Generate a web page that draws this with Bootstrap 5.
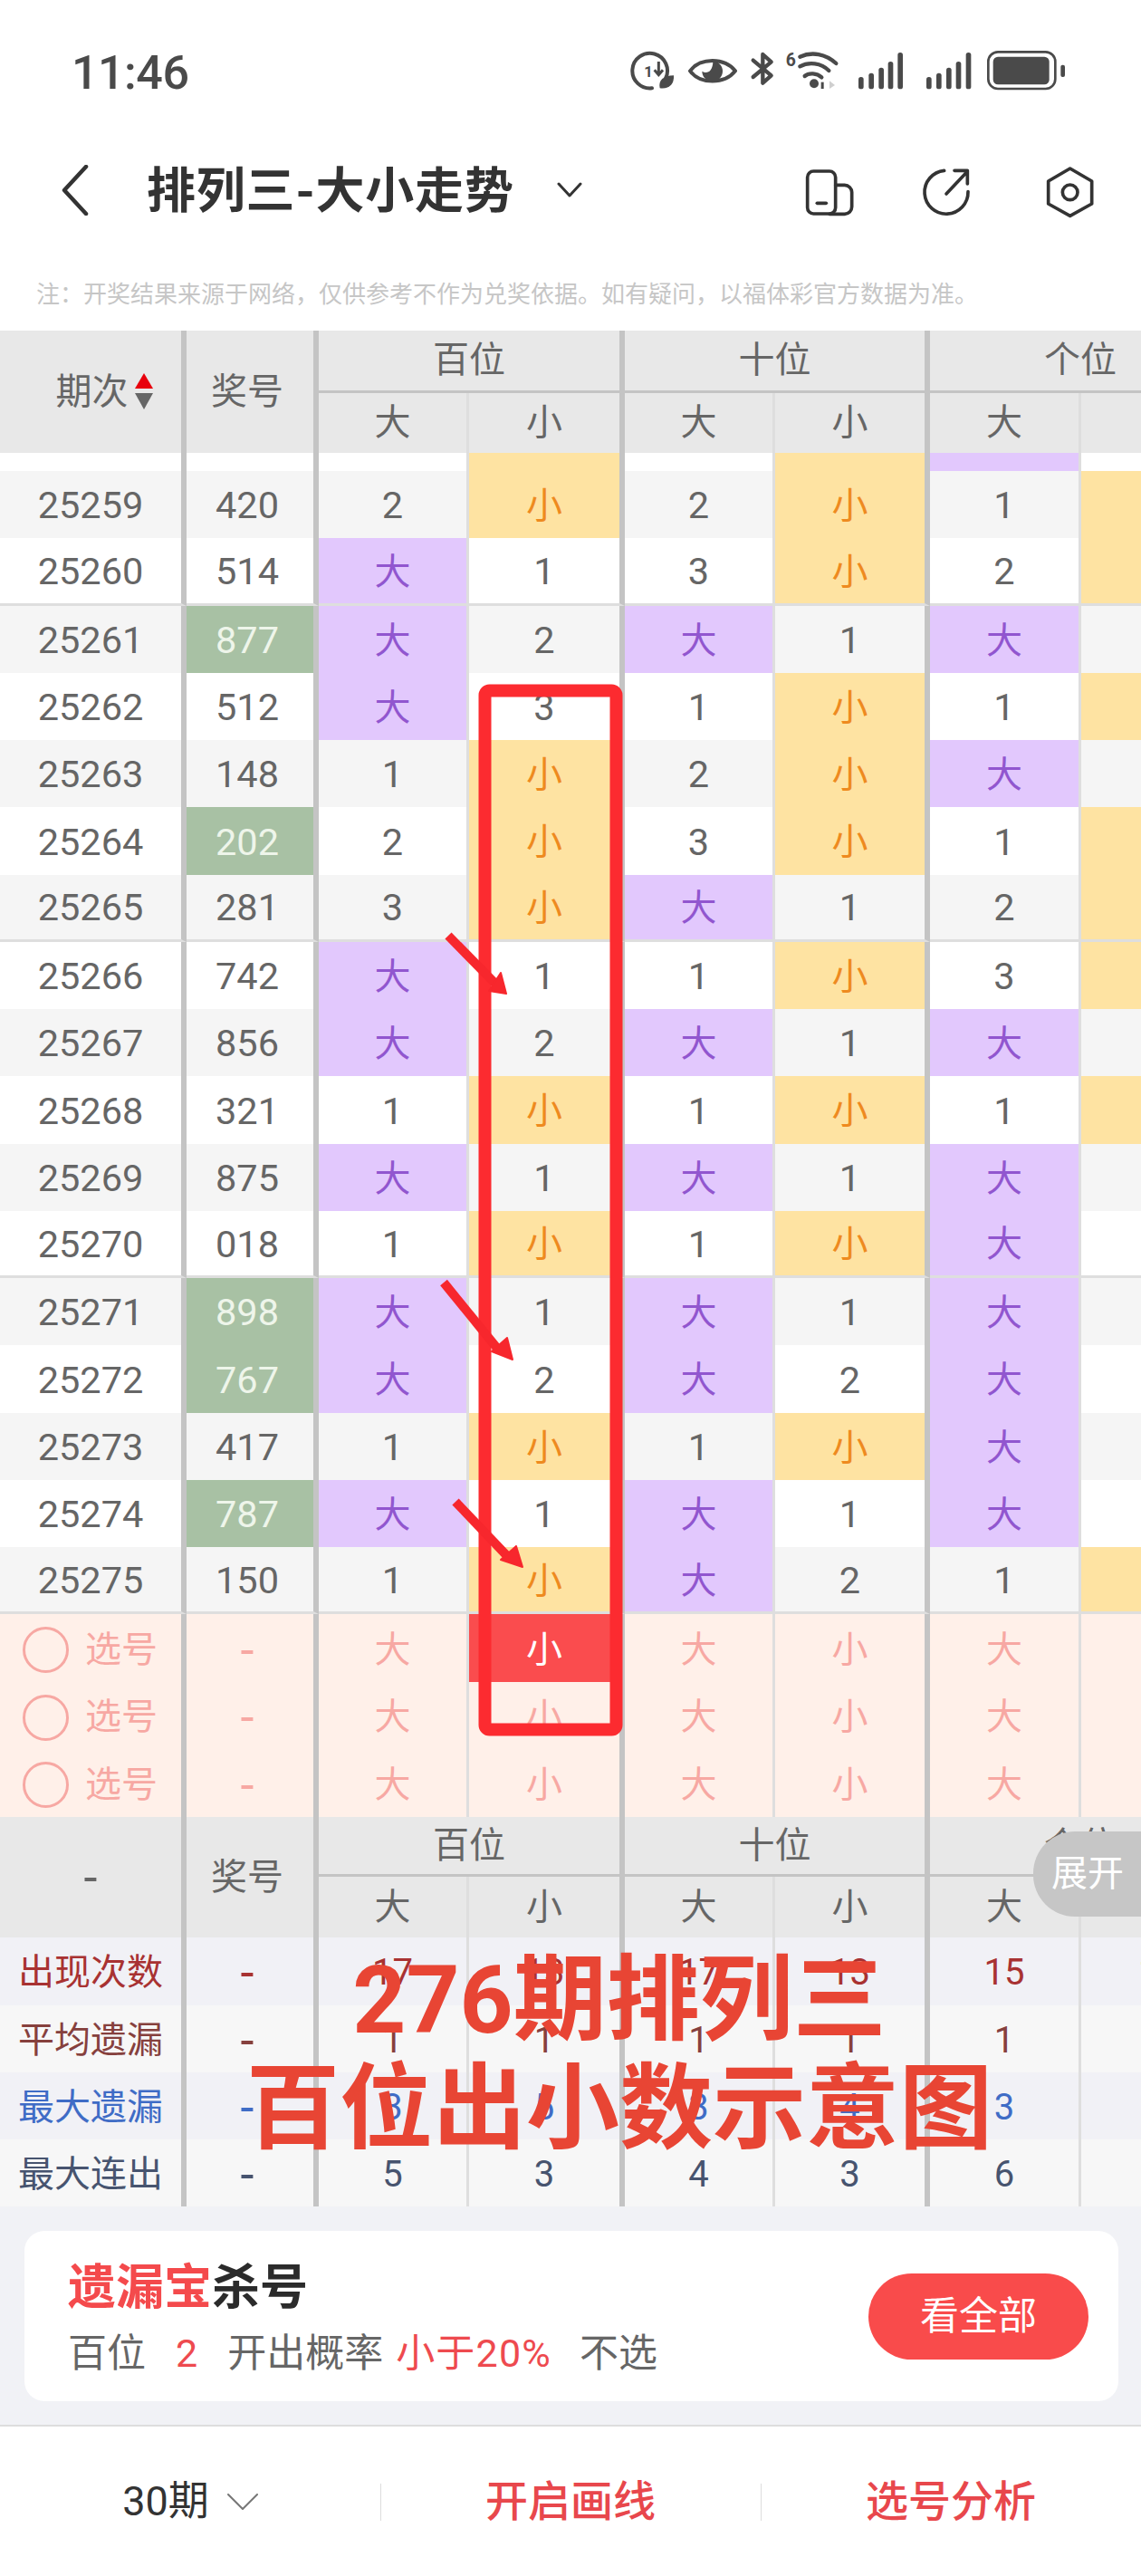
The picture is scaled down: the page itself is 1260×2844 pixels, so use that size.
<!DOCTYPE html>
<html lang="zh-CN">
<head>
  <meta charset="UTF-8" />
  <meta name="viewport" content="width=device-width, initial-scale=1.0"/>
  <title>排列三-大小走势</title>
  <link href="https://cdn.jsdelivr.net/npm/bootstrap@5.3.0/dist/css/bootstrap.min.css" rel="stylesheet" />
  <style>
      body { margin: 0; background: #fff; font-family: Roboto, "Noto Sans CJK SC", sans-serif; color: #666; }
      .screen { width: 1260px; height: 2844px; overflow: hidden; }

      .status-strip { height: 140px; padding: 43px 0 0 79px; }
      .clock { font-size: 52px; line-height: 76px; font-weight: 500; color: #4a4a4a; letter-spacing: -0.5px; }
      .status-icons { position: absolute; left: 680px; top: 40px; }

      .title-strip { height: 140px; padding-left: 68px; padding-right: 20px; }
      .page-title { margin: 3px 0 0 64px; font-size: 54px; font-weight: 700; color: #333; line-height: 1; letter-spacing: 0.8px; }
      .title-caret { margin-left: 47px; }

      .disclaimer { height: 85px; margin: 0; padding: 30px 0 0 40px; font-size: 26px; line-height: 30px; color: #c6c6c6; white-space: nowrap; }

      .trend-wrap { width: 1260px; overflow: hidden; }
      table.trend { width: 1365px; table-layout: fixed; border-collapse: separate; border-spacing: 0; margin: 0; font-size: 40px; line-height: 1; }
      table.trend td, table.trend th { padding: 0; border: 0; text-align: center; vertical-align: middle; font-weight: 400; color: #666; background: transparent; box-shadow: none; white-space: nowrap; }
      table.trend td { padding-top: 4px; }
      table.trend .edge { border-right: 6px solid #c4c4c4; }
      table.trend .hair { border-right: 3px solid #dedede; }
      table.trend .prize-col { padding-right: 6px; }
      table.trend .dash-text { font-size: 54px; }
      table.trend .digit-text { font-size: 41.5px; }
      table.trend td.digit-text { padding-top: 2px; }

      .head-band th { background: #e8e8e8 !important; }
      .head-top { height: 69px; }
      .head-sub { height: 66px; }
      .foot-top { height: 66.5px; }
      .foot-sub { height: 67px; }
      table.trend th.under { border-bottom: 3px solid #c4c4c4; }
      table.trend th.period-head { padding-left: 30px; }
      table.trend th.unit-head { padding-right: 6px; }
      .sort-mark { margin-left: 7px; vertical-align: -6px; }

      .draw-cut { height: 20px; }
      .draw-row { height: 74.25px; }
      .draw-row.tint td { background: #f5f5f5; }
      table.trend .draw-row.fifth td { border-bottom: 3px solid #dedede; }
      table.trend .cell-big, table.trend .draw-row td.cell-big { background: #e2c8fd; color: #9156cf; }
      table.trend .cell-small, table.trend .draw-row td.cell-small { background: #fee3a2; color: #ee8a1f; }
      table.trend .draw-row td.cell-pair { background: #a8c1a4; color: #eef5ea; }
      table.trend .draw-cut td { padding: 0; }

      .pick-row { height: 74.5px; }
      table.trend .pick-row td { background: #fff0e9; color: #f7a8a3; }
      table.trend .pick-row td.picked { background: #fa4c4e; color: #fff; }
      .pick-label { padding-left: 25px; gap: 18px; }
      .pick-ring { width: 51px; height: 51px; border: 3px solid #f7a8a3; border-radius: 50%; }

      .sum-row { height: 74.25px; }
      table.trend .sum-row.shade td { background: #f1f1f6; }
      table.trend .sum-row.plain td { background: #f7f7f7; }
      table.trend .sum-row.c-red td { color: #a83232; }
      table.trend .sum-row.c-brown td { color: #86403d; }
      table.trend .sum-row.c-blue td { color: #3f6cc6; }
      table.trend .sum-row.c-slate td { color: #47546f; }

      .kill-band { padding: 27px 25px 26px 27px; background: #f1f2f6; border-bottom: 2px solid #ddd; box-sizing: content-box; height: 188px; }
      .kill-card { height: 188px; background: #fff; border-radius: 22px; padding: 5px 33px 0 48px; }
      .kill-title { font-size: 53px; line-height: 1; font-weight: 700; color: #2b2b2b; margin-bottom: 24px; }
      .kill-red { color: #f44a4c; }
      .kill-text { font-size: 43px; line-height: 1; color: #666; }
      .kill-text .hot { color: #ee4a4f; }
      .gap-a { margin-left: 33px; }
      .gap-b { margin-left: 14px; letter-spacing: 1.2px; }
      .gap-c { margin-left: 31px; }
      .see-all { width: 243px; height: 95px; margin-top: -5px; border: 0; padding: 0; background: #f94b4b; color: #fff; font-size: 43px; line-height: 1; }
      .see-all:hover { background: #f94b4b; color: #fff; }

      .tool-strip { height: 165px; }
      .tool-cell { flex: 1 1 0; }
      .tool-cell + .tool-cell { position: relative; }
      .tool-cell + .tool-cell::before { content: ""; position: absolute; left: 0; top: 63px; height: 41px; border-left: 1px solid #ddd; }
      .tool-text { font-size: 47px; line-height: 1; font-weight: 500; color: #e8474c; }
      .period-text { font-size: 45px; line-height: 1; color: #333; margin-right: 20px; }

      .sketch-layer { position: absolute; left: 0; top: 0; pointer-events: none; }
      .poster { position: absolute; left: 0; top: 2149px; width: 1368px; text-align: center; font-size: 103px; line-height: 120px; font-weight: 700; color: #e84534; white-space: nowrap; }
      .unfold { position: absolute; left: 1141px; top: 2022px; width: 119px; height: 94px; padding-left: 20px; background: #c6c6c6; color: #fff; font-size: 40px; line-height: 1; border-radius: 46px 0 0 46px; }
  </style>
</head>
<body>
  <div class="screen position-relative">
      <div class="status-strip">
          <div class="clock">11:46</div>
      </div>
      <svg class="status-icons" width="520" height="60" viewBox="0 0 1560 180" fill="#4a4a4a">
          <!-- data saver -->
          <path d="M165 140 A58 58 0 1 0 120 172" fill="none" stroke="#4a4a4a" stroke-width="12" stroke-linecap="round"/>
          <text x="108" y="136" font-family="Roboto" font-weight="700" font-size="50" text-anchor="middle">1</text>
          <path d="M142 84v42m-14-14l14 16 14-16" fill="none" stroke="#4a4a4a" stroke-width="9"/>
          <path d="M146 172c-6-26 12-42 46-42 2 30-16 46-46 42z"/>
          <!-- eye -->
          <path d="M246 115C280 70 360 70 396 115C360 160 280 160 246 115z" fill="none" stroke="#4a4a4a" stroke-width="12" stroke-linejoin="round"/>
          <path d="M322 82a34 34 0 1 1-36 34c14 10 36 4 36-34z"/>
          <!-- bluetooth -->
          <path d="M455 80l60 50-28 25V60l28 25-60 50" fill="none" stroke="#4a4a4a" stroke-width="13" stroke-linejoin="round" stroke-linecap="round"/>
          <!-- wifi 6 -->
          <text x="580" y="100" font-family="Roboto" font-weight="700" font-size="58" text-anchor="middle">6</text>
          <g fill="none" stroke="#4a4a4a" stroke-width="13" stroke-linecap="round">
              <path d="M610 68C650 50 695 58 730 90"/>
              <path d="M610 100C640 84 680 88 706 114"/>
              <path d="M626 132C640 120 666 122 682 136"/>
          </g>
          <circle cx="657" cy="157" r="15"/>
          <rect x="680" y="152" width="9" height="22"/>
          <path d="M708 148l18 14-18 12z" fill="#cfcfcf"/>
          <!-- signal -->
          <g>
              <rect x="804" y="135" width="17" height="40" rx="8"/><rect x="838" y="122" width="17" height="53" rx="8"/><rect x="871" y="104" width="17" height="71" rx="8"/><rect x="902" y="84" width="17" height="91" rx="8"/><rect x="934" y="54" width="17" height="121" rx="8"/>
              <rect x="1029" y="135" width="17" height="40" rx="8"/><rect x="1062" y="122" width="17" height="53" rx="8"/><rect x="1095" y="104" width="17" height="71" rx="8"/><rect x="1127" y="84" width="17" height="91" rx="8"/><rect x="1160" y="54" width="17" height="121" rx="8"/>
          </g>
          <!-- battery -->
          <rect x="1234" y="52" width="222" height="122" rx="32" fill="none" stroke="#4a4a4a" stroke-width="8"/>
          <rect x="1250" y="68" width="186" height="92" rx="16"/>
          <rect x="1474" y="95" width="14" height="40" rx="6"/>
      </svg>

      <div class="title-strip d-flex align-items-center">
          <svg width="30" height="56" viewBox="0 0 30 56" fill="none" stroke="#333" stroke-width="4.5" stroke-linecap="round" stroke-linejoin="round"><path d="M27 2L3 28l24 26"/></svg>
          <h1 class="page-title">排列三-大小走势</h1>
          <svg class="title-caret" width="28" height="18" viewBox="0 0 28 18" fill="none" stroke="#333" stroke-width="3" stroke-linecap="round" stroke-linejoin="round"><path d="M2 2l12 13L26 2"/></svg>
          <svg class="ms-auto" width="400" height="80" viewBox="0 0 1200 240" fill="none" stroke="#333" stroke-width="11" stroke-linecap="round" stroke-linejoin="round">
              <rect x="155" y="57" width="93" height="141" rx="20"/>
              <path d="M248 103h30a24 24 0 0 1 24 24v48a24 24 0 0 1-24 24h-50"/>
              <path d="M187 163h30"/>
              <path d="M608 55A72 72 0 1 0 687 125"/>
              <path d="M615 132L685 58M642 55h43v44"/>
              <path d="M1025 48L1097 90V165L1025 205L953 165V90z"/>
              <circle cx="1025" cy="127" r="25"/>
          </svg>
      </div>

      <p class="disclaimer">注：开奖结果来源于网络，仅供参考不作为兑奖依据。如有疑问，以福体彩官方数据为准。</p>

      <div class="trend-wrap">
          <table class="table trend">
              <colgroup>
                  <col style="width:206px"><col style="width:146px"><col style="width:166px"><col style="width:172px"><col style="width:166px"><col style="width:171px"><col style="width:167px"><col style="width:171px">
              </colgroup>
              <thead class="head-band">
                  <tr class="head-top">
                      <th rowspan="2" class="edge period-head">期次<svg class="sort-mark" width="20" height="40" viewBox="0 0 20 40"><path d="M10 0l10 17H0z" fill="#e8000c"/><path d="M0 22h20L10 40z" fill="#666"/></svg></th>
                      <th rowspan="2" class="edge prize-col">奖号</th>
                      <th colspan="2" class="edge under">百位</th>
                      <th colspan="2" class="edge under">十位</th>
                      <th colspan="2" class="under unit-head">个位</th>
                  </tr>
                  <tr class="head-sub">
                      <th class="hair">大</th><th class="edge">小</th>
                      <th class="hair">大</th><th class="edge">小</th>
                      <th class="hair">大</th><th>小</th>
                  </tr>
              </thead>
              <tbody id="draw-body"></tbody>
              <tbody id="pick-body"></tbody>
              <tbody class="head-band">
                  <tr class="foot-top">
                      <th rowspan="2" class="edge dash-text">-</th>
                      <th rowspan="2" class="edge prize-col">奖号</th>
                      <th colspan="2" class="edge under">百位</th>
                      <th colspan="2" class="edge under">十位</th>
                      <th colspan="2" class="under unit-head">个位</th>
                  </tr>
                  <tr class="foot-sub">
                      <th class="hair">大</th><th class="edge">小</th>
                      <th class="hair">大</th><th class="edge">小</th>
                      <th class="hair">大</th><th>小</th>
                  </tr>
              </tbody>
              <tbody id="sum-body"></tbody>
          </table>
      </div>

      <div class="kill-band">
          <div class="kill-card d-flex align-items-center justify-content-between">
              <div>
                  <div class="kill-title"><span class="kill-red">遗漏宝</span>杀号</div>
                  <div class="kill-text">百位<span class="hot gap-a">2</span><span class="gap-a">开出概率</span><span class="hot gap-b">小于20%</span><span class="gap-c">不选</span></div>
              </div>
              <button class="btn see-all rounded-pill" type="button">看全部</button>
          </div>
      </div>

      <div class="tool-strip d-flex">
          <div class="tool-cell d-flex align-items-center justify-content-center">
              <span class="period-text">30期</span>
              <svg width="34" height="18" viewBox="0 0 34 18" fill="none" stroke="#777" stroke-width="2" stroke-linecap="round" stroke-linejoin="round"><path d="M1 1l16 16L33 1"/></svg>
          </div>
          <div class="tool-cell d-flex align-items-center justify-content-center"><span class="tool-text">开启画线</span></div>
          <div class="tool-cell d-flex align-items-center justify-content-center"><span class="tool-text">选号分析</span></div>
      </div>

      <div class="unfold d-flex align-items-center">展开</div>

      <svg class="sketch-layer" width="1260" height="2844" viewBox="0 0 1260 2844">
          <rect x="535.5" y="762.5" width="145" height="1147" rx="5" fill="none" stroke="#fc2b30" stroke-width="14"/>
          <g fill="#f7272d" stroke="#f7272d" stroke-linejoin="round">
              <path d="M495 1033L548 1087" fill="none" stroke-width="10"/>
              <path d="M559 1097L553 1074L540 1094z" stroke-width="2"/>
              <path d="M490 1416L551 1491" fill="none" stroke-width="10"/>
              <path d="M566 1501L560 1477L543 1492z" stroke-width="2"/>
              <path d="M503 1658L563 1721" fill="none" stroke-width="10"/>
              <path d="M577 1730L570 1707L553 1722z" stroke-width="2"/>
          </g>
      </svg>

      <div class="poster">276期排列三<br>百位出小数示意图</div>
  </div>

  <script src="https://cdn.jsdelivr.net/npm/bootstrap@5.3.0/dist/js/bootstrap.bundle.min.js"></script>
  <script>
    // period, number, then hundreds / tens / units as big+small pairs
    const draws = [
        "25259 420 2 小 2 小 1 小",
        "25260 514 大 1 3 小 2 小",
        "25261 877 大 2 大 1 大 1",
        "25262 512 大 3 1 小 1 小",
        "25263 148 1 小 2 小 大 1",
        "25264 202 2 小 3 小 1 小",
        "25265 281 3 小 大 1 2 小",
        "25266 742 大 1 1 小 3 小",
        "25267 856 大 2 大 1 大 1",
        "25268 321 1 小 1 小 1 小",
        "25269 875 大 1 大 1 大 1",
        "25270 018 1 小 1 小 大 2",
        "25271 898 大 1 大 1 大 3",
        "25272 767 大 2 大 2 大 4",
        "25273 417 1 小 1 小 大 5",
        "25274 787 大 1 大 1 大 6",
        "25275 150 1 小 大 2 1 小"
    ];

    const sums = [
        ["出现次数", "shade c-red", ["-", "17", "13", "17", "13", "15", "15"]],
        ["平均遗漏", "plain c-brown", ["-", "1", "1", "1", "1", "1", "1"]],
        ["最大遗漏", "shade c-blue", ["-", "3", "5", "3", "4", "3", "3"]],
        ["最大连出", "plain c-slate", ["-", "5", "3", "4", "3", "6", "3"]]
    ];

    // border class by column index
    function sideClass(i) {
        if (i === 1) return "edge prize-col";
        if (i === 0 || i === 3 || i === 5) return "edge";
        if (i === 2 || i === 4 || i === 6) return "hair";
        return "";
    }

    function addCell(row, text, cls) {
        let td = document.createElement("td");
        td.textContent = text;
        td.className = cls;
        row.appendChild(td);
        return td;
    }

    function markClass(v) {
        if (v === "大") return "cell-big";
        if (v === "小") return "cell-small";
        return "digit-text";
    }

    function fillDraws() {
        let body = document.getElementById("draw-body");

        // bottom of the row scrolled under the header
        let cut = document.createElement("tr");
        cut.className = "draw-cut";
        ["", "", "", "小", "", "小", "大", ""].forEach((v, i) => {
            addCell(cut, "", sideClass(i) + " " + markClass(v));
        });
        body.appendChild(cut);

        draws.forEach((line, n) => {
            let parts = line.split(" ");
            let row = document.createElement("tr");
            row.className = "draw-row" + (n % 2 === 0 ? " tint" : "") + (n % 5 === 1 ? " fifth" : "");
            parts.forEach((v, i) => {
                let cls = sideClass(i) + " " + markClass(v);
                if (i === 1 && new Set(v).size < 3) cls += " cell-pair";
                addCell(row, v, cls);
            });
            body.appendChild(row);
        });
    }

    function fillPicks() {
        let body = document.getElementById("pick-body");
        for (let n = 0; n < 3; n++) {
            let row = document.createElement("tr");
            row.className = "pick-row";
            let first = addCell(row, "", "edge");
            first.innerHTML = '<div class="pick-label d-flex align-items-center"><span class="pick-ring"></span><span>选号</span></div>';
            addCell(row, "-", "edge prize-col dash-text");
            ["大", "小", "大", "小", "大", "小"].forEach((v, i) => {
                let td = addCell(row, v, sideClass(i + 2));
                if (n === 0 && i === 1) td.classList.add("picked");
            });
            body.appendChild(row);
        }
    }

    function fillSums() {
        let body = document.getElementById("sum-body");
        sums.forEach(([name, cls, vals]) => {
            let row = document.createElement("tr");
            row.className = "sum-row " + cls;
            [name].concat(vals).forEach((v, i) => {
                addCell(row, v, sideClass(i) + (v === "-" ? " dash-text" : ""));
            });
            body.appendChild(row);
        });
    }

    fillDraws();
    fillPicks();
    fillSums();
  </script>
</body>
</html>
